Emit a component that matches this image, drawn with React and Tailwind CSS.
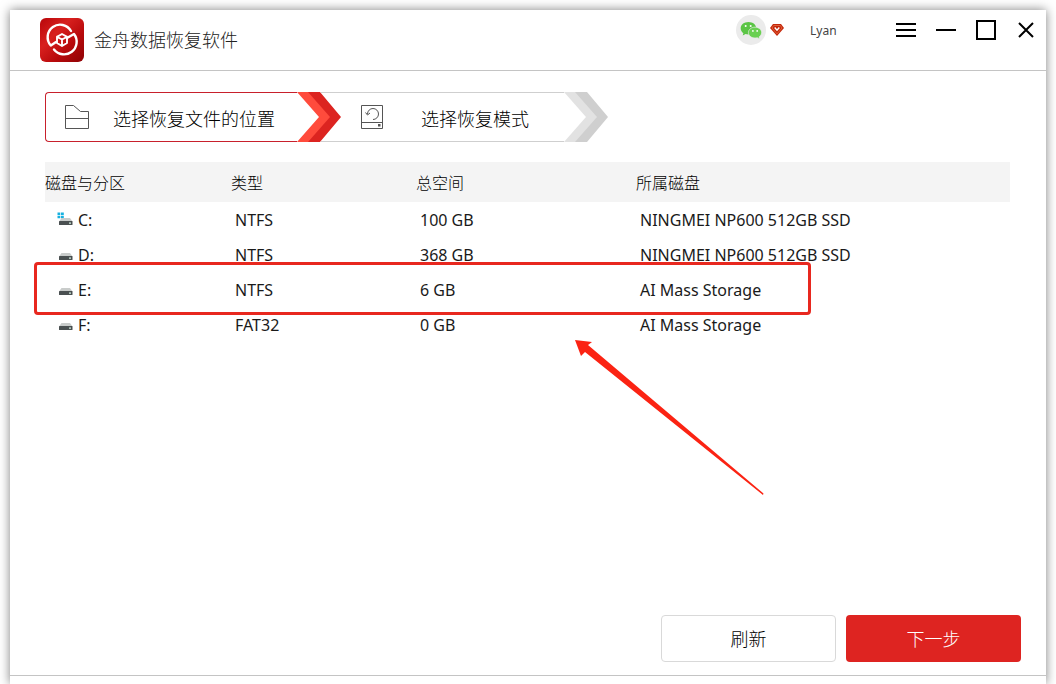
import React, { useState } from "react";

const drives = [
    { name: "C:", type: "NTFS", size: "100 GB", disk: "NINGMEI NP600 512GB SSD", system: true },
    { name: "D:", type: "NTFS", size: "368 GB", disk: "NINGMEI NP600 512GB SSD" },
    { name: "E:", type: "NTFS", size: "6 GB", disk: "AI Mass Storage" },
    { name: "F:", type: "FAT32", size: "0 GB", disk: "AI Mass Storage" }
];

const AppLogo = () => (
    <svg className="size-11" viewBox="0 0 44 44" fill="none">
        <defs>
            <linearGradient id="logoBg" x1="0" y1="0" x2="44" y2="44" gradientUnits="userSpaceOnUse">
                <stop offset="0" stopColor="#b8060a" />
                <stop offset="0.35" stopColor="#d8201e" />
                <stop offset="0.65" stopColor="#b80a0c" />
                <stop offset="1" stopColor="#8e0205" />
            </linearGradient>
        </defs>
        <rect width="44" height="44" rx="6" fill="url(#logoBg)" />
        <g stroke="#fff" strokeLinecap="round" strokeLinejoin="round">
            <path d="M31 13A12.500 12.500 0 1 0 10.800 27.500L16 24" strokeWidth="2.4" />
            <path d="M14 31.500A12.500 12.500 0 0 0 34 16L27 20" strokeWidth="2.4" />
            <path d="M22 16L27 18.800V25L22 28L17 25V18.800ZM17 18.800L22 21.500L27 18.800M22 21.500V28" strokeWidth="1.9" />
        </g>
    </svg>
);

const WechatIcon = () => (
    <svg className="size-[30px]" viewBox="0 0 30 30">
        <circle cx="15" cy="15" r="15" fill="#ebebeb" />
        <path d="M12.500 7C8 7 4.700 9.800 4.700 13.300c0 2 1 3.700 2.700 4.900L6.700 20.500l2.900-1.400c.9.200 1.800.4 2.900.4 4.400 0 7.800-2.800 7.800-6.200S16.900 7 12.500 7Z" fill="#5bc545" />
        <path d="M19 12.200c-3.800 0-6.600 2.400-6.600 5.400s2.800 5.400 6.600 5.400c.8 0 1.600-.1 2.300-.3l2.400 1.300-.6-2.100c1.600-1 2.500-2.500 2.500-4.300 0-3-2.800-5.400-6.600-5.400Z" fill="#6ad052" stroke="#ebebeb" strokeWidth="0.700" />
        <g fill="#fff">
            <circle cx="9.700" cy="11" r="1" />
            <circle cx="14.700" cy="11" r="1" />
            <circle cx="16.900" cy="15.900" r="0.900" />
            <circle cx="21.200" cy="15.900" r="0.900" />
        </g>
    </svg>
);

const GemIcon = () => (
    <svg className="h-3 w-3.5" viewBox="0 0 14 12">
        <path d="M3 0h8L14 4 7 12 0 4Z" fill="#c4260a" />
        <path d="M3.700 1.500h6.600L12 4 7 9.800 2 4Z" fill="#c4260a" stroke="#f08a5a" strokeWidth="0.600" />
        <path d="M4.700 3.500L7 6.200l2.300-2.700" fill="none" stroke="#fff" strokeWidth="1.400" />
    </svg>
);

const DriveIcon = ({ system }) => (
    <svg className="h-4 w-4" viewBox="0 0 16 16">
        {system && <path d="M0.500 0.500h2.800v2.500H0.500ZM4 0.500h2.800v2.500H4ZM0.500 3.700h2.800v2.500H0.500ZM4 3.700h2.800v2.500H4Z" fill="#18b1e0" />}
        <path d="M4.500 6H13L15.500 9.500H2Z" fill="#c9cccb" />
        <rect x="2" y="9" width="13.500" height="4" rx="0.600" fill="#4a5051" />
        <rect x="12" y="10.500" width="2" height="1.200" fill="#d7f3e4" />
    </svg>
);

const FolderIcon = () => (
    <svg className="size-6" viewBox="0 0 24 24" fill="none" stroke="#555" strokeWidth="1">
        <path d="M0.500 23.500V0.500H8.500L15.500 6.500H23.500V23.500ZM0.500 13.500H23.500" />
    </svg>
);

const RestoreIcon = () => (
    <svg className="h-6 w-[22px]" viewBox="0 0 22 24" fill="none" stroke="#555">
        <path d="M0.500 0.500H21.500V23.500H0.500ZM0.500 17.500H21.500" />
        <path d="M6.500 9A5.500 5.500 0 1 1 12 14.500" />
        <path d="M4.500 7.500L6.500 10L9 8" />
        <rect x="17.500" y="19.500" width="1.500" height="1.500" fill="#555" />
    </svg>
);

const Chevron = ({ light, dark }) => (
    <svg className="h-[50px] w-11 shrink-0" viewBox="0 0 44 50">
        <path d="M0 0H12L34 25L12 50H0L22 25Z" fill={light} />
        <path d="M11 0H23L44 25L23 50H11L33 25Z" fill={dark} />
    </svg>
);

const App = () => {
    const [selected, setSelected] = useState("E:");

    return (
        <div className="h-screen overflow-hidden bg-white px-2.5 pt-2.5 font-['Noto_Sans','Noto_Sans_CJK_SC',sans-serif] font-light text-black">
            <div className="flex h-full flex-col bg-white shadow-[0_0_10px_rgba(0,0,0,0.5)]">
                <header className="flex h-[61px] shrink-0 items-start justify-between border-b border-[#c4c4c4] pl-[30px] pr-2.5">
                    <div className="flex items-center gap-2.5 pt-2">
                        <AppLogo />
                        <h1 className="text-lg text-[#222]">金舟数据恢复软件</h1>
                    </div>
                    <div className="flex h-10 items-center">
                        <WechatIcon />
                        <span className="ml-1"><GemIcon /></span>
                        <span className="ml-[26px] w-[26px] pt-0.5 text-xs font-normal text-[#444]">Lyan</span>
                        <div className="ml-[60px] flex items-center gap-5">
                            <button type="button" aria-label="Menu">
                                <svg className="size-5" viewBox="0 0 20 20" stroke="#000" strokeWidth="2"><path d="M0 4H20M0 10H20M0 16H20" /></svg>
                            </button>
                            <button type="button" aria-label="Minimize">
                                <svg className="size-5" viewBox="0 0 20 20" stroke="#000" strokeWidth="2"><path d="M0 10H20" /></svg>
                            </button>
                            <button type="button" aria-label="Maximize">
                                <svg className="size-5" viewBox="0 0 20 20" fill="none" stroke="#000" strokeWidth="2"><path d="M1 1H19V19H1Z" /></svg>
                            </button>
                            <button type="button" aria-label="Close">
                                <svg className="size-5" viewBox="0 0 20 20" stroke="#000" strokeWidth="2"><path d="M3 3L17 17M17 3L3 17" /></svg>
                            </button>
                        </div>
                    </div>
                </header>

                <main className="flex flex-1 flex-col pl-[35px] pr-[25px] pt-[21px]">
                    <div className="flex text-lg">
                        <div className="flex">
                            <div className="flex h-[50px] w-[252px] items-center rounded-l border border-r-0 border-[#c8202c] pl-[19px]">
                                <FolderIcon />
                                <span className="ml-6 pt-1">选择恢复文件的位置</span>
                            </div>
                            <Chevron light="#ff4b3c" dark="#dc2420" />
                        </div>
                        <div className="-ml-5 flex">
                            <div className="flex h-[50px] w-[243px] items-center border-y border-[#cfcfcf] pl-10">
                                <RestoreIcon />
                                <span className="ml-[38px] pt-1">选择恢复模式</span>
                            </div>
                            <Chevron light="#e2e2e2" dark="#cfcfcf" />
                        </div>
                    </div>

                    <div className="relative mr-[11px] mt-5">
                        <table className="w-full table-fixed text-left">
                            <colgroup>
                                <col className="w-[186px]" />
                                <col className="w-[185px]" />
                                <col className="w-[220px]" />
                                <col />
                            </colgroup>
                            <thead>
                                <tr className="h-10 bg-[#f4f4f4]">
                                    <th className="pt-0.5 font-light">磁盘与分区</th>
                                    <th className="pt-0.5 font-light">类型</th>
                                    <th className="pt-0.5 font-light">总空间</th>
                                    <th className="pt-0.5 font-light">所属磁盘</th>
                                </tr>
                            </thead>
                            <tbody className="font-normal text-[#1a1a1a]">
                                {drives.map(drive => (
                                    <tr
                                        key={drive.name}
                                        className="h-[35px]"
                                        aria-selected={selected === drive.name}
                                        onClick={() => setSelected(drive.name)}
                                    >
                                        <td className="pl-3">
                                            <div className="flex items-center gap-[5px]">
                                                <DriveIcon system={drive.system} />
                                                {drive.name}
                                            </div>
                                        </td>
                                        <td className="pl-1">{drive.type}</td>
                                        <td className="pl-1">{drive.size}</td>
                                        <td className="pl-1">{drive.disk}</td>
                                    </tr>
                                ))}
                            </tbody>
                        </table>
                        {/* callout around the E: row */}
                        <div className="pointer-events-none absolute -left-[11px] top-[100px] h-[53px] w-[777px] rounded border-3 border-[#e8281f]" />
                        <svg className="pointer-events-none absolute left-[530px] top-[178px] h-[155px] w-[189px]" viewBox="0 0 189 155">
                            <path d="M0 0L17 2L13 5L188.500 153.500L188 155L10 12L6 16Z" fill="#fb2313" />
                        </svg>
                    </div>

                    <div className="mb-[13px] mt-auto flex justify-end gap-2.5 text-lg">
                        <button type="button" className="h-[47px] w-[175px] rounded border border-[#d9d9d9] bg-white">
                            刷新
                        </button>
                        <button type="button" className="h-[47px] w-[175px] rounded bg-[#de2421] text-white">
                            下一步
                        </button>
                    </div>
                </main>
                <footer className="h-[9px] shrink-0 border-t border-[#c4c4c4]" />
            </div>
        </div>
    );
};

export default App;
